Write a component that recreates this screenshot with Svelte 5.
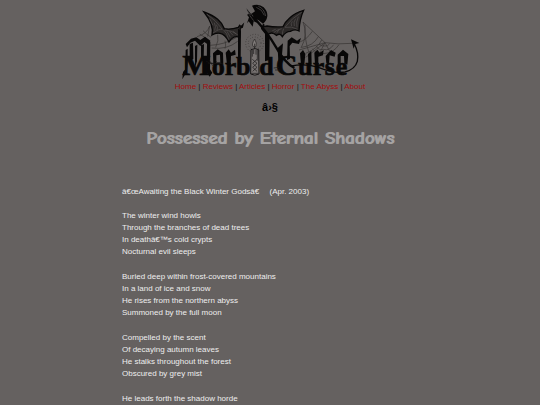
<script>
    const links = ['Home', 'Reviews', 'Articles', 'Horror', 'The Abyss', 'About'];

    const stanzas = [
        ['The winter wind howls', 'Through the branches of dead trees', 'In deathâ€™s cold crypts', 'Nocturnal evil sleeps'],
        ['Buried deep within frost-covered mountains', 'In a land of ice and snow', 'He rises from the northern abyss', 'Summoned by the full moon'],
        ['Compelled by the scent', 'Of decaying autumn leaves', 'He stalks throughout the forest', 'Obscured by grey mist'],
        ['He leads forth the shadow horde']
    ];
</script>

<header>
    <a class="logo" href="#home" aria-label="Morbid Curse">
        <svg viewBox="0 0 570 243" role="img" aria-hidden="true">
            <!-- cobwebs -->
            <g class="web">
                <path d="M104 78Q96 102 66 110M104 78L98 110M84 92Q94 102 108 112M74 102Q88 110 102 122M106 136Q150 134 184 112M110 144Q156 150 188 124M128 104Q132 122 122 142M150 122Q154 136 150 146" />
                <path d="M384 66Q412 92 450 128Q488 134 532 130M384 66Q400 104 378 144M390 74Q388 120 402 158M450 128L372 150M450 128L392 172M450 128L428 170M450 128L470 164M412 94Q394 120 374 126M430 110Q414 138 380 142M440 120Q428 146 392 160M424 138Q430 152 446 148Q462 154 476 134M412 146Q426 166 450 160Q474 160 492 134M432 132Q440 140 450 138Q458 140 464 131" />
            </g>
            <!-- wings -->
            <path class="membrane" d="M87 36Q114 46 128 58Q142 70 148 86Q166 90 190 82L194 76L198 80L204 74L202 82L196 84L194 112Q176 104 162 126Q150 102 135 100Q122 98 111 105Q118 74 87 36Z" />
            <path class="membrane" d="M386 31Q360 38 344 54Q330 66 324 80Q300 82 276 78L266 80L266 72L260 86L276 106Q290 92 304 106Q316 98 322 110Q332 94 346 94Q360 86 372 93Q374 56 386 31Z" />
            <g class="etch">
                <path d="M95 42Q122 60 142 88M142 88Q132 86 114 99M146 90Q156 98 161 119M150 90Q172 92 188 104M118 68Q124 80 119 92M124 74Q130 82 126 90M156 94L166 112M164 95L174 106M174 94L184 102M104 56L114 76" />
                <path d="M380 37Q350 54 330 82M330 82Q350 78 368 88M326 86Q322 94 322 104M320 86Q304 90 296 98M370 50Q362 66 366 82M362 56Q354 66 358 78M352 64Q346 72 350 78M312 88L306 98M302 88L292 92" />
            </g>
            <!-- candle with its halo -->
            <circle class="halo" cx="239" cy="130" r="19" />
            <circle class="halo" cx="239" cy="130" r="27" />
            <path class="flame" d="M239 117Q229 132 234 139Q239 144 243 139Q247 131 239 117Z" />
            <path d="M239 131V148" class="line" />
            <path class="candle" d="M228 149Q240 143 251 149L252 222Q240 229 227 222Z" />
            <path class="line" d="M232 150V170M236 149V162M247 150V182M243 150V164M232 178L246 190L233 202L246 214M246 178L233 190L246 202L233 214M229 220H250" />
            <!-- the name itself -->
            <g class="name">
                <text x="22" y="225" class="capital">M</text>
                <text x="110" y="225">o</text>
                <text x="149" y="225">r</text>
                <text x="183" y="225">b</text>
                <text x="253" y="225">d</text>
                <text x="302" y="225" class="capital">C</text>
                <text x="369" y="225">u</text>
                <text x="413" y="225">r</text>
                <text x="449" y="225">s</text>
                <text x="482" y="225">e</text>
            </g>
            <!-- spiked fence and drips behind the lettering -->
            <path class="ink" d="M36 142L32 132L48 116L64 112L76 120L90 110L106 122L102 136L88 126L76 138L60 122L46 128ZM32 150L38 146L38 190L36 214L22 238L24 216L31 208ZM44 132L54 128L55 176L44 186ZM60 138L67 134L66 184L60 202ZM78 136L87 132L86 178L78 172ZM96 130L106 126L105 208L112 218L104 230L95 216Z" />
            <path class="ink" d="M189 86L198 92L197 176L189 182ZM270 100L284 108L283 180L270 184ZM338 122L350 112L366 122L378 114L372 132L352 128L344 138L345 176L336 180ZM308 144L324 130L320 176L310 184Z" />
            <path class="ink" d="M114 160L128 148L144 158L145 196L136 190L135 164L124 166L124 192L115 196ZM152 158L161 148L168 158L180 149L182 164L168 168L167 194L156 194ZM375 160L384 150L391 162L388 194L378 194ZM399 162L409 152L410 194L400 194ZM418 158L427 149L434 158L446 150L444 166L430 170L430 194L420 194ZM452 168L468 150L482 158L479 170L464 166L462 194L454 190ZM488 164L504 149L520 162L517 194L508 190L507 168L497 168L497 194L488 196Z" />
            <path class="line" d="M94 184Q112 196 138 186M98 190H144M102 180L114 198M122 182L132 196M296 204L312 202M300 210L316 210" />
            <!-- axe -->
            <path class="ink" d="M231 17Q252 10 266 22Q278 34 277 48Q276 62 264 71L250 60L242 58L246 68L236 64L233 80L221 64L216 70L222 52L216 44L222 42L214 25L228 42L236 37L240 34Z" />
            <path class="etch" d="M250 19Q268 26 272 48M244 22Q262 28 268 46M224 46L236 62M230 43L242 59M218 33L226 45" />
            <path class="handle" d="M234 50Q278 98 302 140Q330 190 358 204" />
            <!-- barbed tail -->
            <path class="tail" d="M350 198Q388 190 430 202Q480 222 510 216Q540 208 547 184Q552 158 538 132" />
            <path class="ink" d="M528 118L553 129L541 132L536 146Z" />
        </svg>
    </a>
    <nav>
        {#each links as link, i}
            {#if i > 0}{' | '}{/if}<a href="#{link.toLowerCase().replace(' ', '-')}">{link}</a>
        {/each}
    </nav>
    <h3>â›§</h3>
    <h1>Possessed by Eternal Shadows</h1>
</header>

<main>
    <h2>â€œAwaiting the Black Winter Godsâ€ <span>(Apr. 2003)</span></h2>
    {#each stanzas as lines}
        <p>
            {#each lines as line}
                {line}<br />
            {/each}
        </p>
    {/each}
</main>

<style>
:global(body) {
    background-color: #656160;
    color: #eee;
    font-family: "Liberation Sans", Arial, sans-serif;
    font-size: 8px;
    line-height: 12px;
}
:global(html) {
    overflow: hidden;
}
header {
    text-align: center;
}
.logo {
    display: block;
    width: 190px;
    margin: 0 auto;
}
.logo svg {
    display: block;
    width: 100%;
}
.ink, .name {
    fill: #080707;
}
.membrane {
    fill: #2b2827;
    stroke: #080707;
    stroke-width: 4;
}
.name {
    font-family: "Liberation Serif", "Times New Roman", serif;
    font-size: 78px;
    font-weight: bold;
    stroke: #080707;
    stroke-width: 2;
}
.capital {
    font-size: 90px;
}
.web, .line, .etch, .handle, .tail, .halo {
    fill: none;
}
.web {
    stroke: #353231;
    stroke-width: 2;
}
.line {
    stroke: #171515;
    stroke-width: 2;
}
.etch {
    stroke: #565251;
    stroke-width: 2;
}
.handle {
    stroke: #080707;
    stroke-width: 7;
}
.tail {
    stroke: #080707;
    stroke-width: 4;
}
.halo {
    stroke: #393534;
    stroke-width: 3;
    stroke-dasharray: 2 6;
}
.flame {
    fill: #817c7a;
    stroke: #292625;
    stroke-width: 2;
}
.candle {
    fill: #777271;
    stroke: #171515;
    stroke-width: 3;
}
nav {
    color: #111;
}
nav a {
    color: #a30d0d;
    text-decoration: none;
}
h3 {
    margin: 8px 0 11px;
    color: #000;
    font-size: 11px;
}
h1 {
    margin: 0;
    color: #a5a3a3;
    font-family: "Comic Sans MS", "Comic Neue", cursive;
    font-size: 19px;
    line-height: 28px;
    text-shadow: 1px 0 #a5a3a3;
}
main {
    max-width: 296px;
    margin: 34px auto 0;
}
h2 {
    margin: 0 0 12px;
    font-size: 8px;
    font-weight: normal;
}
h2 span {
    margin-left: 8px;
}
p {
    margin: 0 0 13px;
}
</style>
